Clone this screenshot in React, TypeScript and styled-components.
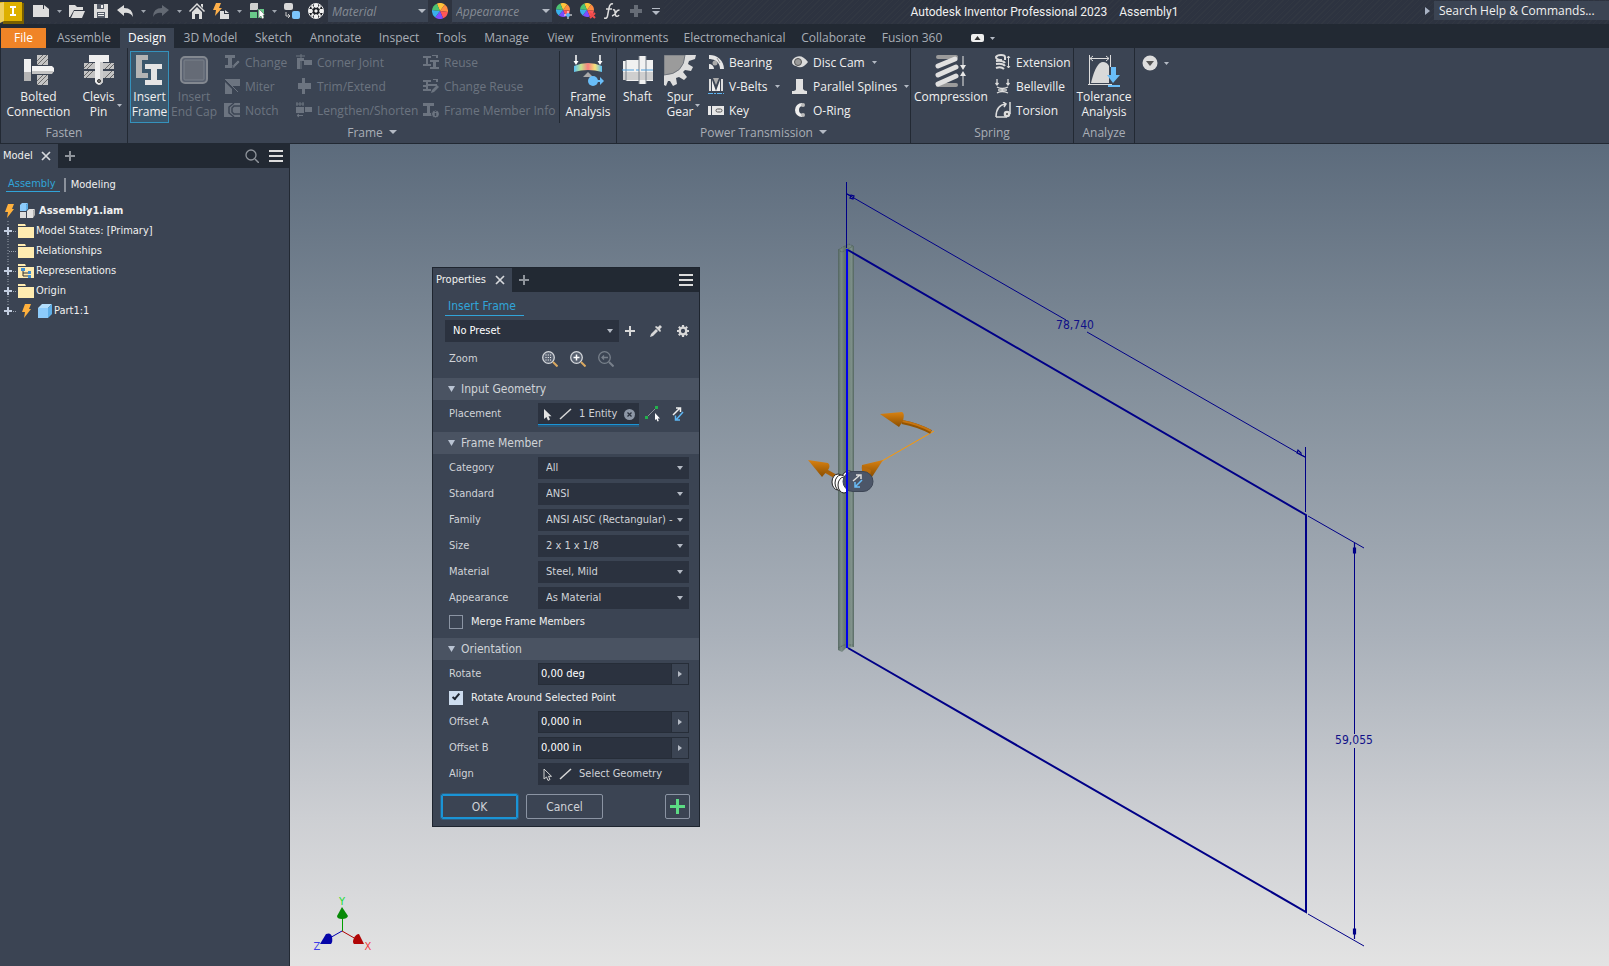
import React, { ReactNode } from "react";
import styled, { createGlobalStyle, css } from "styled-components";

const color = {
  bar: "#2e3440",
  dark: "#222933",
  panel: "#3b4453",
  field: "#2b323f",
  section: "#4a5362",
  text: "#f0f0f0",
  soft: "#d0d3d8",
  muted: "#a9aeb6",
  off: "#6c7480",
  link: "#31a4d8",
};
const ui = `"Open Sans", "Noto Sans", sans-serif`;
const narrow = `"DejaVu Sans Condensed", "DejaVu Sans", sans-serif`;

const GlobalStyle = createGlobalStyle`
  *, *::before, *::after { box-sizing: border-box; }
  body { margin: 0; background: ${color.panel}; }
  button, input, select { font: inherit; color: inherit; margin: 0; }
  button { background: none; border: 0; padding: 0; cursor: pointer; }
  svg { display: block; flex: none; }
`;

const Page = styled.div`
  display: flex;
  flex-direction: column;
  min-height: 100vh;
  font: 12px/15px ${ui};
  color: ${color.text};
  overflow: hidden;
`;

/* ---------- title bar ---------- */

const TitleBar = styled.header`
  display: flex;
  height: 24px;
  background: repeating-linear-gradient(135deg, #2d3340 0 3px, #313742 3px 4px);
`;
const QuickAccess = styled.div`
  display: flex;
  align-items: center;
  height: 22px;
  background: ${color.bar};
`;
const AppButton = styled.button`
  width: 29px;
  height: 24px;
  align-self: flex-start;
`;
const QuickButton = styled.button<{ $w?: number }>`
  display: flex;
  align-items: center;
  justify-content: center;
  width: ${(p) => p.$w ?? 24}px;
  height: 22px;
`;
const ComboBox = styled.div`
  position: relative;
  display: flex;
  align-items: center;
  width: 100px;
  height: 22px;
  background: ${color.panel};
  color: #858b94;
  font-style: italic;
  & > svg { position: absolute; right: 2px; pointer-events: none; }
`;
const ComboSelect = styled.select`
  appearance: none;
  width: 100%;
  height: 22px;
  padding: 0 4px;
  border: 0;
  background: transparent;
`;
const WindowTitle = styled.h1`
  flex: 1;
  display: flex;
  align-items: center;
  justify-content: center;
  gap: 12px;
  margin: 0;
  font: 400 12px/15px Roboto, ${ui};
  white-space: nowrap;
`;
const SearchArea = styled.div`
  display: flex;
  align-items: center;
  gap: 4px;
  height: 21px;
`;
const SearchInput = styled.input`
  width: 175px;
  height: 19px;
  padding: 0 5px;
  border: 0;
  background: ${color.panel};
  &::placeholder { color: ${color.text}; opacity: 1; }
`;

/* ---------- ribbon ---------- */

const TabBar = styled.nav`
  display: flex;
  align-items: flex-end;
  height: 24px;
  padding-left: 1px;
  background: ${color.dark};
`;
const Tab = styled.button<{ $w: number; $kind?: "file" | "active" }>`
  width: ${(p) => p.$w}px;
  height: 20px;
  padding-bottom: 2px;
  color: ${color.muted};
  white-space: nowrap;
  ${(p) => p.$kind === "active" && css`background: ${color.panel}; color: #fff;`}
  ${(p) => p.$kind === "file" && css`background: #f08427; color: #fff; margin-right: 2px;`}
`;
const TabToggle = styled.button`
  display: flex;
  align-items: center;
  gap: 6px;
  height: 20px;
  margin-left: 20px;
`;
const Ribbon = styled.div`
  display: flex;
  height: 96px;
  background: ${color.panel};
  border-left: 1px solid ${color.dark};
  border-bottom: 1px solid ${color.dark};
`;
const Panel = styled.section<{ $w: number }>`
  display: flex;
  flex-direction: column;
  width: ${(p) => p.$w}px;
  border-right: 1px solid ${color.dark};
`;
const PanelBody = styled.div<{ $inset?: number }>`
  display: flex;
  height: 75px;
  padding: 3px 0 0 ${(p) => p.$inset ?? 0}px;
`;
const PanelTitle = styled.h2`
  display: flex;
  align-items: center;
  justify-content: center;
  gap: 6px;
  height: 20px;
  margin: 0;
  padding-bottom: 2px;
  font-size: 12px;
  font-weight: 400;
  color: ${color.muted};
`;
const BigButton = styled.button<{ $w: number; $selected?: boolean; $after?: number }>`
  display: flex;
  flex-direction: column;
  align-items: center;
  gap: 2px;
  width: ${(p) => p.$w}px;
  height: 72px;
  padding-top: 3px;
  margin-right: ${(p) => p.$after ?? 0}px;
  border: 1px solid transparent;
  text-align: center;
  white-space: pre;
  &:disabled { color: ${color.off}; }
  ${(p) => p.$selected && css`background: #3b566b; border-color: #3592bc;`}
`;
const CaretButton = styled.button<{ $after?: number }>`
  display: flex;
  width: 6px;
  height: 72px;
  padding-top: 53px;
  margin-right: ${(p) => p.$after ?? 0}px;
`;
const SmallColumn = styled.div<{ $w: number }>`
  display: flex;
  flex-direction: column;
  align-items: flex-start;
  width: ${(p) => p.$w}px;
`;
const SmallButton = styled.button`
  display: flex;
  align-items: center;
  gap: 5px;
  height: 24px;
  padding-bottom: 2px;
  white-space: nowrap;
  &:disabled { color: ${color.off}; }
`;
const SmallCaret = styled.span`
  padding-left: 2px;
`;
const Separator = styled.div`
  width: 1px;
  height: 72px;
  background: ${color.dark};
`;
const RibbonMenu = styled.button`
  display: flex;
  align-items: center;
  gap: 6px;
  height: 30px;
  padding-left: 7px;
`;

/* ---------- model browser ---------- */

const Workspace = styled.main`
  display: flex;
  flex: 1;
`;
const Browser = styled.aside`
  width: 290px;
  flex: none;
  border-right: 1px solid ${color.dark};
  background: ${color.panel};
  font: 11px/14px ${narrow};
`;
const DockHeader = styled.div`
  display: flex;
  align-items: center;
  height: 24px;
  padding-right: 6px;
  background: ${color.dark};
`;
const DockTab = styled.div<{ $w: number }>`
  display: flex;
  align-items: center;
  justify-content: space-between;
  width: ${(p) => p.$w}px;
  height: 24px;
  padding: 0 7px 0 3px;
  margin-right: 7px;
  background: ${color.panel};
  color: ${color.text};
`;
const HeaderSpace = styled.span`
  flex: 1;
`;
const HeaderButton = styled.button<{ $after?: number }>`
  margin-right: ${(p) => p.$after ?? 0}px;
`;
const ModeBar = styled.div`
  display: flex;
  align-items: center;
  gap: 4px;
  height: 33px;
  padding-left: 6px;
`;
const ModeLink = styled.a<{ $active?: boolean }>`
  padding: 0 4px 0 2px;
  border-bottom: 1px solid ${(p) => (p.$active ? color.link : "transparent")};
  color: ${(p) => (p.$active ? color.link : color.text)};
  text-decoration: none;
  & + & { border-left: 2px solid #8b919b; border-bottom: 0; padding-left: 5px; }
`;
const Tree = styled.ul`
  margin: 0;
  padding: 0;
  list-style: none;
`;
const TreeRow = styled.li<{ $root?: boolean }>`
  display: flex;
  align-items: center;
  gap: ${(p) => (p.$root ? 4 : 2)}px;
  height: 20px;
  padding-left: ${(p) => (p.$root ? 5 : 0)}px;
  font-weight: ${(p) => (p.$root ? 700 : 400)};
  white-space: nowrap;
`;
const TreeGap = styled.span`
  width: 2px;
`;

/* ---------- viewport ---------- */

const Viewport = styled.div`
  position: relative;
  flex: 1;
  min-width: 0;
  background: linear-gradient(#5c6b7c 0%, #84909c 30%, #aab1ba 60%, #cdcfd3 82%, #e3e3e3 100%);
`;
const Drawing = styled.svg`
  position: absolute;
  inset: 0;
  width: 100%;
  height: 100%;
`;
const Triad = styled.svg`
  position: absolute;
  left: 20px;
  bottom: 12px;
`;

/* ---------- property dialog ---------- */

const Dialog = styled.form`
  position: absolute;
  left: 142px;
  top: 123px;
  width: 268px;
  border: 1px solid #1e252f;
  background: ${color.panel};
  font: 11px/14px ${narrow};
  color: ${color.soft};
`;
const Crumb = styled.div`
  padding: 7px 12px 4px;
`;
const CrumbLink = styled.a`
  display: inline-block;
  padding: 0 8px 1px 3px;
  border-bottom: 1px solid ${color.link};
  color: ${color.link};
  font-size: 12px;
  line-height: 15px;
  text-decoration: none;
`;
const PresetRow = styled.div`
  display: flex;
  align-items: center;
  padding: 0 10px 0 12px;
`;
const PresetTools = styled.div`
  display: flex;
  align-items: center;
  gap: 15px;
  padding-left: 6px;
`;
const Row = styled.div<{ $top?: number; $bottom?: number }>`
  display: flex;
  align-items: center;
  height: 22px;
  margin: ${(p) => p.$top ?? 4}px 10px ${(p) => p.$bottom ?? 0}px 16px;
`;
const RowLabel = styled.label`
  width: 89px;
  flex: none;
`;
const SelectWrap = styled.div<{ $w?: number }>`
  position: relative;
  display: flex;
  align-items: center;
  ${(p) => (p.$w ? css`width: ${p.$w}px;` : css`flex: 1;`)}
  height: 22px;
  background: ${color.field};
  & > svg { position: absolute; right: 6px; pointer-events: none; }
`;
const Select = styled.select<{ $strong?: boolean }>`
  appearance: none;
  width: 100%;
  height: 22px;
  padding: 0 14px 0 8px;
  border: 0;
  background: transparent;
  color: ${(p) => (p.$strong ? "#fff" : color.soft)};
`;
const Section = styled.button`
  display: flex;
  align-items: center;
  gap: 6px;
  width: 100%;
  height: 22px;
  padding-left: 15px;
  background: ${color.section};
  font-size: 12px;
`;
const ZoomTools = styled.div`
  display: flex;
  gap: 12px;
  padding-left: 4px;
`;
const Picker = styled.button<{ $active?: boolean }>`
  display: flex;
  align-items: center;
  gap: 7px;
  height: 22px;
  padding-left: 5px;
  background: ${color.field};
  white-space: nowrap;
  ${(p) => (p.$active ? css`width: 101px; box-shadow: inset 0 -1px #1a94d6, 0 2px #2b5676;` : css`flex: 1;`)}
`;
const PlacementTools = styled.div`
  display: flex;
  flex: 1;
  justify-content: space-between;
  padding: 0 4px 0 5px;
`;
const CheckRow = styled.label<{ $bottom: number }>`
  display: flex;
  align-items: center;
  gap: 8px;
  height: 14px;
  margin: 6px 0 ${(p) => p.$bottom}px 16px;
  color: ${color.text};
`;
const Check = styled.input`
  appearance: none;
  width: 14px;
  height: 14px;
  border: 1px solid #8b94a3;
  &:checked {
    border-color: #cddcee;
    background: #cddcee;
  }
  &:checked::after {
    content: "";
    display: block;
    width: 4px;
    height: 8px;
    margin: 0 0 0 4px;
    border: solid #1d2430;
    border-width: 0 2px 2px 0;
    transform: rotate(40deg);
  }
`;
const ValueField = styled.div`
  display: flex;
  flex: 1;
  height: 22px;
  border: 1px solid #262d38;
  background: ${color.field};
`;
const ValueInput = styled.input`
  flex: 1;
  min-width: 0;
  padding: 0 2px;
  border: 0;
  background: transparent;
  color: #fff;
`;
const ValueMore = styled.button`
  display: flex;
  align-items: center;
  justify-content: center;
  width: 17px;
  background: ${color.panel};
  border-left: 1px solid #262d38;
`;
const Footer = styled.div`
  display: flex;
  align-items: center;
  gap: 8px;
  padding: 9px 9px 7px 8px;
`;
const ActionButton = styled.button<{ $primary?: boolean }>`
  width: 77px;
  height: 25px;
  border: 1px solid #8b94a3;
  border-radius: 2px;
  font-size: 12px;
  ${(p) => p.$primary && css`border-color: #1a94d6; box-shadow: 0 0 0 1px #2f5e80, inset 0 0 0 1px #1a94d6;`}
`;
const AddButton = styled.button`
  display: flex;
  align-items: center;
  justify-content: center;
  width: 25px;
  height: 25px;
  margin-left: auto;
  border: 1px solid #8b94a3;
  border-radius: 2px;
`;

/* ---------- icons ---------- */

const Icon = ({ w = 16, h, children }: { w?: number; h?: number; children: ReactNode }) => (
  <svg width={w} height={h ?? w} viewBox={`0 0 ${w} ${h ?? w}`} aria-hidden="true">{children}</svg>
);
const Caret = ({ w = 5, fill = "#b4bac4" }: { w?: number; fill?: string }) => (
  <svg width={w} height={w === 5 ? 3 : 4} viewBox="0 0 8 4" preserveAspectRatio="none" aria-hidden="true">
    <path d="M0 0h8L4 4z" fill={fill} />
  </svg>
);
const RightCaret = () => <Icon w={5} h={8}><path d="M0 0l5 4-5 4z" fill="#a9b3c4" /></Icon>;
const SmallRight = () => <Icon w={4} h={6}><path d="M0 0l4 3-4 3z" fill="#b4bac4" /></Icon>;
const Plus = ({ w = 10, c = "#8f949b", t = 2 }: { w?: number; c?: string; t?: number }) => (
  <Icon w={w}><path d={`M${w / 2} 0v${w}M0 ${w / 2}h${w}`} stroke={c} strokeWidth={t} /></Icon>
);
const Cross = () => <Icon w={10}><path d="M1 1l8 8M9 1l-8 8" stroke="#d6d8dc" strokeWidth="1.7" /></Icon>;
const MenuLines = () => <Icon w={14} h={12}><path d="M0 1h14M0 6h14M0 11h14" stroke="#dcdcdc" strokeWidth="2" /></Icon>;
const Bolt = () => <Icon w={10} h={14}><path d="M3 0h6L7 5h2L2 14l1-6H0z" fill="#ffb13d" /></Icon>;
const Cube = () => (
  <Icon w={14}><path d="M0 4h10v10H0z" fill="#8ccbfb" /><path d="M0 4l4-4h10l-4 4z" fill="#b3defc" /><path d="M10 4l4-4v10l-4 4z" fill="#5eaee6" /></Icon>
);
const AssemblyIcon = () => (
  <Icon>
    <path d="M1 2l2-2h6L7 2v6H1z" fill="#8ccbfb" /><path d="M7 2l2-2v6L7 8z" fill="#5eaee6" />
    <path d="M1 9h6v6H1z" fill="#dcdcdc" /><path d="M8 8l2-2h6l-2 2v7H8z" fill="#e2e2e2" /><path d="M14 8l2-2v6l-2 3z" fill="#b3b3b3" />
  </Icon>
);
const Folder = ({ tree }: { tree?: boolean }) => (
  <Icon>
    <path d="M0 1h7l1 2H0zM0 4h16v11H0z" fill="#ffecb0" />
    {tree && <><path d="M5 7v6h5M5 10h5" fill="none" stroke="#333" /><path d="M3 5h4v3H3zM10 8h3v3h-3zM10 12h3v3h-3z" fill="#3f8fd2" /></>}
  </Icon>
);
const Branch = ({ expandable, last }: { expandable?: boolean; last?: boolean }) => (
  <Icon w={16} h={20}>
    <path d={last ? "M8 0v9" : "M8 0v20"} stroke="#9aa1ad" strokeDasharray="1 2" />
    <path d="M9 10.500h7" stroke="#9aa1ad" strokeDasharray="1 1" />
    {expandable && <><path d="M3 5h10v10H3z" fill={color.panel} /><path d="M8 6v8M4 10h8" stroke="#c3cee0" strokeWidth="2" /></>}
  </Icon>
);
const Wheel = ({ mark }: { mark?: "add" | "remove" }) => {
  const parts = ["#ffc23a", "#ff8c42", "#ff5757", "#7c4dff", "#39b0ec", "#4cc271"];
  const r = mark ? 7 : 8;
  const at = (i: number) => `${r + r * Math.sin((i * Math.PI) / 3 - 0.4)} ${r - r * Math.cos((i * Math.PI) / 3 - 0.4)}`;
  return (
    <Icon>
      {parts.map((c, i) => <path key={c} fill={c} d={`M${r} ${r}L${at(i)}A${r} ${r} 0 0 1 ${at(i + 1)}z`} />)}
      {mark === "add" && <><path d="M12 8v8M8 12h8" stroke="#fff" /><circle cx="12" cy="12" r="2" fill="#58b4f5" /></>}
      {mark === "remove" && <path d="M10 10l5 5M15 10l-5 5" stroke="#f04b4b" strokeWidth="2" />}
    </Icon>
  );
};
const Cursor = ({ outline }: { outline?: boolean }) => (
  <Icon w={9} h={13}><path d="M1 1v10l2.500-2 1.500 3.500 2-1-1.500-3.200H8.500z" fill={outline ? "none" : "#e4e4e4"} stroke="#d0d0d0" strokeWidth={outline ? 1 : 0} /></Icon>
);
const LineIcon = () => <Icon w={13} h={12}><path d="M1 11L12 1" stroke="#d8d8d8" strokeWidth="1.500" /></Icon>;
const SwapIcon = () => (
  <Icon w={14}>
    <path d="M2 8l7-7M5 1h4.500v4" fill="none" stroke="#eee" strokeWidth="1.500" />
    <path d="M12 5l-7 8M4.500 8.500V13H9" fill="none" stroke="#5db5f2" strokeWidth="1.500" />
  </Icon>
);
const Magnifier = ({ kind }: { kind: "window" | "in" | "back" }) => {
  const c = kind === "back" ? "#78808b" : "#d4d7db";
  return (
    <Icon>
      <circle cx="6.500" cy="6.500" r="5.800" fill={kind === "back" ? "none" : "#596271"} stroke={c} strokeWidth="1.300" />
      <path d="M11 11l4.500 4.500" stroke={kind === "back" ? c : "#d9a860"} strokeWidth="2" />
      {kind === "window" && <path d="M3.500 4h6M3.500 6.500h6M3.500 9h6" stroke="#fff" strokeDasharray="1 1.300" />}
      {kind === "in" && <path d="M3.500 6.500h6M6.500 3.500v6" stroke="#fff" strokeWidth="1.500" />}
      {kind === "back" && <path d="M4 6.500h6M6 4.500l-2 2 2 2" fill="none" stroke={c} strokeWidth="1.300" />}
    </Icon>
  );
};

const G = "#6c7480";
const smallIcons: Record<string, ReactNode> = {
  Change: <><path d="M1 1h10v3H8v7h3v3H1v-3h3V4H1z" fill={G} /><path d="M8 15l1-4 5-5 2 2-5 5z" fill={G} stroke={color.panel} strokeWidth=".7" /></>,
  Miter: <><path d="M1 1h15v7H8z" fill={G} /><path d="M1 4l7 7v5H1z" fill={G} /><path d="M1 1l13 13" stroke={G} /></>,
  Notch: <><path d="M0 1h16v14H0z" fill={G} /><path d="M16 4h-6L8 6v4l2 2h6M10 1L5 5v6l5 4" fill="none" stroke={color.panel} strokeWidth="1.500" /></>,
  "Corner Joint": <><path d="M1 4h7v3H4v8H1zM8 6h8v5H8z" fill={G} /><path d="M0 2h9M5 0v15" stroke={G} /></>,
  "Trim/Extend": <><path d="M2 5h4v6H2zM9 5h6v6H9z" fill={G} /><path d="M7.500 0v16" stroke={G} strokeWidth="3" /></>,
  "Lengthen/Shorten": <><path d="M0 5h8v6H0zM9 5h7v5H9z" fill={G} /><path d="M0 2h8M1 0v4M4 0v4M7 0v4M1 13.500h6M3 12l-2 1.500L3 15" fill="none" stroke={G} /></>,
  Reuse: <path d="M0 2h8v2H5v6h3v2H0v-2h3V4H0zM7 6h9v2h-3v5h3v2H7v-2h3V8H7zM9 1h6v3h-2V2H9z" fill={G} />,
  "Change Reuse": <path d="M0 2h8v2H5v2h9v2H5v3h3v2H0v-2h3V9H0V7h3V4H0zM10 1h5v3h-2V2h-3zM8 15l1-3 5-5 2 2-5 5z" fill={G} />,
  "Frame Member Info": <><path d="M0 1h11v3H7v7h3v3H0v-3h4V4H0z" fill={G} /><circle cx="12.500" cy="12" r="4" fill={G} stroke={color.panel} /><path d="M12.500 9v1M12.500 11v3" stroke={color.panel} strokeWidth="1.500" /></>,
  Bearing: <><path d="M1 1a14 14 0 0 1 15 14h-4A10 10 0 0 0 1 5z" fill="#e6e6e6" /><path d="M1 10a5 5 0 0 1 5 5H1z" fill="#e6e6e6" /><circle cx="7" cy="9" r="2.500" fill="#aaa" /><path d="M9 4l3 5" stroke="#999" /></>,
  "V-Belts": <><path d="M1 1h2v12H1zM13 1h2v12h-2z" fill="#ddd" /><path d="M4 2l4 11 4-11v11H4z" fill="#eee" /><path d="M5 0h6L8 7z" fill="#aaa" /><path d="M0 15.500h16" stroke="#5db5f2" strokeDasharray="5 1 2 1" /></>,
  Key: <><path d="M0 4h3v9H0zM4 4h12v9H4z" fill="#e8e8e8" /><rect x="8" y="7" width="6" height="3" rx="1.500" fill="none" stroke="#555" /></>,
  "Disc Cam": <><path d="M0 8Q6 0 12 4q4 1 4 4t-4 5Q6 16 0 8z" fill="#dcdcdc" transform="rotate(180 8 8)" /><circle cx="6" cy="8" r="3.500" fill="#999" stroke="#555" /></>,
  "Parallel Splines": <path d="M4 1h7v10q1 2 4 2v3H0v-3q4 0 4-2z" fill="#e0e0e0" />,
  "O-Ring": <><path d="M10 1a7 7 0 0 0 0 14l1-3a4 4 0 0 1 0-8z" fill="#eee" /><circle cx="11" cy="3" r="2" fill="#bbb" /><circle cx="11" cy="13" r="2" fill="#bbb" /></>,
  Extension: <><path d="M10 6V3q0-2-4-2T1 3q0 3 6 3M1 7q7-1 9 2M1 10q7-1 9 2M1 14q5-2 8 1" fill="none" stroke="#dcdcdc" strokeWidth="2" /><path d="M13.500 2v12M12 4l1.500-2L15 4M12 12l1.500 2 1.500-2" fill="none" stroke="#dcdcdc" /></>,
  Belleville: <path d="M2 1v6M0.500 5L2 7l1.500-2M13 1v6M11.500 5L13 7l1.500-2M2 9q5 3 11 0M3 12h9M2 15q5-3 11 0" fill="none" stroke="#dcdcdc" strokeWidth="1.300" />,
  Torsion: <><path d="M1 15Q1 3 11 2M8 0l3 2-2 3M15 0v12M1 15h11" fill="none" stroke="#dcdcdc" strokeWidth="1.500" /><circle cx="12" cy="12" r="3.300" fill="#ddd" /><circle cx="12" cy="12" r="1" fill="#444" /></>,
};

const bigIcons: Record<string, ReactNode> = {
  bolt: (
    <>
      <path d="M14 0h11v10H14zM14 20h11v10H14z" fill="#c4c4c4" />
      <path d="M14 6l6-6M14 10L24 0M19 10l6-6M14 26l6-6M14 30l10-10M19 30l6-6" stroke="#6b6b6b" />
      <path d="M1 4h7v13H1z" fill="#f0f0f0" /><path d="M1 17h7v9H1z" fill="#b5b5b5" />
      <path d="M9 11h20l2 2v4H9z" fill="#f4f4f4" /><path d="M9 16h22l-2 3H9z" fill="#c4c4c4" />
    </>
  ),
  pin: (
    <>
      <path d="M1 8h30v6H1zM1 16h30v7H1z" fill="#c4c4c4" />
      <path d="M1 13l5-5M4 14l6-6M22 14l6-6M26 14l5-5M1 21l5-5M3 23l7-7M22 23l7-7M27 23l4-4" stroke="#666" />
      <path d="M6 0h20v7H6zM12 7h8v20q-4 6-8 0z" fill="#efefef" /><path d="M17 7h3v20l-3 3z" fill="#ccc" />
      <circle cx="16" cy="26" r="1.500" fill="#777" stroke="#333" />
    </>
  ),
  frame: (
    <>
      <path d="M2 0h12v5H8v13h6v5H2z" fill="#b4b4b4" />
      <path d="M11 9h17v5h-5v11h5v5H11v-5h6V14h-6z" fill="#e4e4e4" />
    </>
  ),
  cap: <><rect x="3" y="2" width="26" height="26" rx="4" fill="#596170" stroke="#838890" strokeWidth="2" /><rect x="6" y="5" width="20" height="20" rx="1" fill="#656b76" stroke="#7b818a" /></>,
  analysis: (
    <>
      <defs><linearGradient id="stress"><stop offset="0" stopColor="#58c0f8" /><stop offset=".25" stopColor="#c5e48c" /><stop offset=".5" stopColor="#f77f7f" /><stop offset=".75" stopColor="#f6e27a" /><stop offset="1" stopColor="#58c0f8" /></linearGradient></defs>
      <path d="M2 11q14-6 28 0v6q-14-4-28 0z" fill="url(#stress)" />
      <path d="M4 0v8M28 0v8" stroke="#fff" strokeWidth="1.500" /><path d="M1.500 6h5l-2.500 4zM25.500 6h5l-2.500 4z" fill="#fff" />
      <path d="M16 17l5 5H11z" fill="#aaa" /><circle cx="21" cy="26" r="5" fill="#69bdf8" /><path d="M25 25h3v-3l4 4-4 4v-3h-3z" fill="#69bdf8" />
    </>
  ),
  shaft: (
    <>
      <path d="M1 6h3v19H1zM4 5h13v21H4zM17 1h7v28h-7zM24 5h7v21h-7z" fill="#f1f1f1" />
      <path d="M1 17h30v8H1z" fill="#cfcfcf" /><path d="M4 5v21M17 1v28M24 1v28" stroke="#79808a" />
      <path d="M0 15h32" stroke="#4f9fdc" strokeDasharray="12 2 3 2" />
    </>
  ),
  gear: (
    <>
      <path d="M0 0h32l-1 4-6 2-1 3 5 3-2 4-6-1-2 2 4 5-3 3-5-3-3 1 1 6-4 2-3-5H4l-2 5-2-1z" fill="#dedede" />
      <path d="M0 0h21Q20 19 0 20z" fill="#9b9b9b" stroke="#6f747c" />
    </>
  ),
  spring: (
    <>
      <path d="M3 2h18M3 30h18" stroke="#9b9b9b" strokeWidth="4" strokeLinecap="round" />
      <path d="M3 11L20 4M3 20l18-8M3 29l18-8" stroke="#e0e0e0" strokeWidth="5" strokeLinecap="round" />
      <path d="M28 1v10M28 20v11" stroke="#e8e8e8" /><path d="M25 10h6l-3 5zM25 21h6l-3-5z" fill="#e8e8e8" />
    </>
  ),
  tolerance: (
    <>
      <path d="M1.500 0v29M22.500 0v12M0 29.500h24" stroke="#ddd" /><path d="M2 3.500h19M5 1L2 3.500 5 6M18 1l3 2.500L18 6" fill="none" stroke="#ddd" />
      <path d="M3 28Q8 7 15 7q4 0 6 4v17z" fill="#d9d9d9" />
      <path d="M23 12h5v8h4l-7 8-6-8h4zM20 30h12v2H20z" fill="#69bdf8" />
    </>
  ),
};
const Big = ({ name }: { name: string }) => <Icon w={32}>{bigIcons[name]}</Icon>;

const Small = ({ label, disabled, menu }: { label: string; disabled?: boolean; menu?: boolean }) => (
  <SmallButton disabled={disabled}>
    <Icon>{smallIcons[label]}</Icon>
    {label}
    {menu && <SmallCaret><Caret /></SmallCaret>}
  </SmallButton>
);

/* ---------- page parts ---------- */

const QuickCaret = ({ w = 12 }: { w?: number }) => <QuickButton $w={w} aria-label="More"><Caret fill="#9fa5ae" /></QuickButton>;

const Header = () => (
  <TitleBar>
    <QuickAccess>
      <AppButton aria-label="Inventor">
        <Icon w={24}>
          <path d="M3 3h21v21H3z" fill="#7a6000" /><path d="M0 2h22v19H0z" fill="#ddb000" /><path d="M0 3l4-1v19l-4 2z" fill="#f0d060" />
          <path d="M10 6h6v2h-2v6h2v2h-6v-2h2V8h-2z" fill="#fff" />
        </Icon>
      </AppButton>
      <QuickButton aria-label="New"><Icon><path d="M0 2h10v4h6v8H0zM11 2l5 4h-5z" fill="#ddd" /></Icon></QuickButton>
      <QuickCaret />
      <QuickButton aria-label="Open"><Icon><path d="M0 2h6l2 2h6v3H5L1 14H0zM5 8h11l-3 7H2z" fill="#ddd" /></Icon></QuickButton>
      <QuickButton aria-label="Save"><Icon><path d="M1 1h14v14H1z" fill="#ddd" /><path d="M4 1h7v5H4zM4 9h8v6H4z" fill="#555c68" /><path d="M8 2h2v3H8zM5 10h6v1H5zM5 12h6v1H5z" fill="#eee" /></Icon></QuickButton>
      <QuickButton aria-label="Undo"><Icon><path d="M0 7l7-5v3q9 0 9 9-3-5-9-4v3z" fill="#ddd" /></Icon></QuickButton>
      <QuickCaret />
      <QuickButton aria-label="Redo"><Icon><path d="M16 7L9 2v3q-9 0-9 9 3-5 9-4v3z" fill="#636973" /></Icon></QuickButton>
      <QuickCaret />
      <QuickButton aria-label="Home"><Icon><path d="M8 0l8 8-1 1-7-7-7 7-1-1zM12 1h2v4l-2-2z" fill="#ddd" /><path d="M8 4l5 5v7h-3v-5H6v5H3V9z" fill="#ddd" /></Icon></QuickButton>
      <QuickButton aria-label="Update"><Icon><path d="M3 0h5L6 5h3l-7 8 1-6H0z" fill="#ffb04a" /><path d="M7 8h4v3h5v5H7zM12 7l4 3h-4z" fill="#ddd" /></Icon></QuickButton>
      <QuickCaret />
      <QuickButton aria-label="Select"><Icon><path d="M1 1l1-1h7v6l-1 1H1z" fill="#d0d0d0" /><path d="M1 9h7v6H1zM9 6h6v9H9z" fill="#69c98a" /><path d="M10 6v9l2-2 1 3 2-1-1-3h2z" fill="#fff" stroke="#333" strokeWidth=".4" /></Icon></QuickButton>
      <QuickCaret w={11} />
      <QuickButton aria-label="Component"><Icon><rect x="0" y="0" width="9" height="7" rx="2" fill="#d8d8d8" /><rect x="8" y="8" width="8" height="8" rx="2" fill="#7cc4fa" /><path d="M2 9v4h4M4 11l2 2-2 2" fill="none" stroke="#ccc" /></Icon></QuickButton>
      <QuickButton aria-label="Ball"><Icon><circle cx="8" cy="8" r="7.500" fill="#1c1f25" stroke="#f2f2f2" /><path d="M6 1h4v3l-2 1-2-1zM8 6l2 2-2 2-2-2zM6 15h4v-3l-2-1-2 1zM1 6v4h3l1-2-1-2zM15 6v4h-3l-1-2 1-2zM3 3l2-1 1 3-2 1zM13 3l-2-1-1 3 2 1zM3 13l2 1 1-3-2-1zM13 13l-2 1-1-3 2-1z" fill="#f2f2f2" /></Icon></QuickButton>
      <ComboBox><ComboSelect aria-label="Material"><option>Material</option></ComboSelect><Caret w={8} /></ComboBox>
      <QuickButton aria-label="Color wheel"><Wheel /></QuickButton>
      <ComboBox><ComboSelect aria-label="Appearance"><option>Appearance</option></ComboSelect><Caret w={8} /></ComboBox>
      <QuickButton aria-label="Add appearance"><Wheel mark="add" /></QuickButton>
      <QuickButton aria-label="Clear appearance"><Wheel mark="remove" /></QuickButton>
      <QuickButton aria-label="Parameters"><Icon><path d="M9 1Q6 0 5 5L3.500 13Q3 16 0 15M2 6h6M9 7q2-1 2 2t1 4q2 1 3-1M15.500 7Q13 7 12 9.500T8 13" fill="none" stroke="#ddd" strokeWidth="1.500" /></Icon></QuickButton>
      <QuickButton aria-label="Add"><Plus w={12} c="#666c76" t={4} /></QuickButton>
      <QuickButton $w={16} aria-label="Customize"><Icon w={8} h={7}><path d="M0 .5h8" stroke="#b4bac4" /><path d="M0 3h8L4 7z" fill="#b4bac4" /></Icon></QuickButton>
    </QuickAccess>
    <WindowTitle><span>Autodesk Inventor Professional 2023</span><span>Assembly1</span></WindowTitle>
    <SearchArea><RightCaret /><SearchInput aria-label="Search" placeholder="Search Help &amp; Commands..." /></SearchArea>
  </TitleBar>
);

const tabs: [string, number][] = [
  ["File", 45], ["Assemble", 72], ["Design", 54], ["3D Model", 73], ["Sketch", 53], ["Annotate", 71], ["Inspect", 56], ["Tools", 49],
  ["Manage", 61], ["View", 47], ["Environments", 91], ["Electromechanical", 119], ["Collaborate", 79], ["Fusion 360", 78],
];

const RibbonArea = () => (
  <>
    <TabBar>
      {tabs.map(([label, w]) => (
        <Tab key={label} $w={w} $kind={label === "File" ? "file" : label === "Design" ? "active" : undefined}>{label}</Tab>
      ))}
      <TabToggle aria-label="Minimize ribbon">
        <Icon w={13} h={8}><rect width="13" height="8" rx="2" fill="#eee" /><path d="M6.500 2l3 4h-6z" fill="#333" /></Icon>
        <Caret />
      </TabToggle>
    </TabBar>
    <Ribbon>
      <Panel $w={127}>
        <PanelBody>
          <BigButton $w={75} $after={4}><Big name="bolt" />{"Bolted\nConnection"}</BigButton>
          <BigButton $w={37}><Big name="pin" />{"Clevis\nPin"}</BigButton>
          <CaretButton aria-label="Clevis Pin menu"><Caret /></CaretButton>
        </PanelBody>
        <PanelTitle>Fasten</PanelTitle>
      </Panel>
      <Panel $w={489}>
        <PanelBody $inset={2}>
          <BigButton $w={39} $after={2} $selected><Big name="frame" />{"Insert\nFrame"}</BigButton>
          <BigButton $w={46} $after={7} disabled><Big name="cap" />{"Insert\nEnd Cap"}</BigButton>
          <SmallColumn $w={72}><Small label="Change" disabled /><Small label="Miter" disabled /><Small label="Notch" disabled /></SmallColumn>
          <SmallColumn $w={127}><Small label="Corner Joint" disabled /><Small label="Trim/Extend" disabled /><Small label="Lengthen/Shorten" disabled /></SmallColumn>
          <SmallColumn $w={136}><Small label="Reuse" disabled /><Small label="Change Reuse" disabled /><Small label="Frame Member Info" disabled /></SmallColumn>
          <Separator />
          <BigButton $w={56}><Big name="analysis" />{"Frame\nAnalysis"}</BigButton>
        </PanelBody>
        <PanelTitle>Frame <Caret w={8} /></PanelTitle>
      </Panel>
      <Panel $w={294}>
        <PanelBody $inset={2}>
          <BigButton $w={37} $after={9}><Big name="shaft" />Shaft</BigButton>
          <BigButton $w={30}><Big name="gear" />{"Spur\nGear"}</BigButton>
          <CaretButton $after={7} aria-label="Spur Gear menu"><Caret /></CaretButton>
          <SmallColumn $w={84}><Small label="Bearing" /><Small label="V-Belts" menu /><Small label="Key" /></SmallColumn>
          <SmallColumn $w={118}><Small label="Disc Cam" menu /><Small label="Parallel Splines" menu /><Small label="O-Ring" /></SmallColumn>
        </PanelBody>
        <PanelTitle>Power Transmission <Caret w={8} /></PanelTitle>
      </Panel>
      <Panel $w={163}>
        <PanelBody>
          <BigButton $w={80} $after={4}><Big name="spring" />Compression</BigButton>
          <SmallColumn $w={78}><Small label="Extension" /><Small label="Belleville" /><Small label="Torsion" /></SmallColumn>
        </PanelBody>
        <PanelTitle>Spring</PanelTitle>
      </Panel>
      <Panel $w={61}>
        <PanelBody>
          <BigButton $w={60}><Big name="tolerance" />{"Tolerance\nAnalysis"}</BigButton>
        </PanelBody>
        <PanelTitle>Analyze</PanelTitle>
      </Panel>
      <RibbonMenu aria-label="Panel options">
        <Icon><circle cx="8" cy="8" r="7.500" fill="#ddd" /><path d="M4 6h8l-4 5z" fill="#555" /></Icon>
        <Caret />
      </RibbonMenu>
    </Ribbon>
  </>
);

const ModelBrowser = () => (
  <Browser>
    <DockHeader>
      <DockTab $w={58}>Model<button aria-label="Close"><Cross /></button></DockTab>
      <button aria-label="Add tab"><Plus /></button>
      <HeaderSpace />
      <HeaderButton $after={10} aria-label="Search"><Icon w={14}><circle cx="6" cy="6" r="5" fill="none" stroke="#8f949b" strokeWidth="1.300" /><path d="M10 10l4 4" stroke="#8f949b" strokeWidth="1.500" /></Icon></HeaderButton>
      <HeaderButton aria-label="Menu"><MenuLines /></HeaderButton>
    </DockHeader>
    <ModeBar><ModeLink $active href="#assembly">Assembly</ModeLink><ModeLink href="#modeling">Modeling</ModeLink></ModeBar>
    <Tree>
      <TreeRow $root><Bolt /><AssemblyIcon />Assembly1.iam</TreeRow>
      <TreeRow><Branch expandable /><Folder />Model States: [Primary]</TreeRow>
      <TreeRow><Branch /><Folder />Relationships</TreeRow>
      <TreeRow><Branch expandable /><Folder tree />Representations</TreeRow>
      <TreeRow><Branch expandable /><Folder />Origin</TreeRow>
      <TreeRow><Branch expandable last /><TreeGap /><Bolt /><TreeGap /><Cube />Part1:1</TreeRow>
    </Tree>
  </Browser>
);

const Scene = () => (
  <Drawing viewBox="290 144 1319 822" preserveAspectRatio="xMinYMin meet" role="img" aria-label="Frame model">
    <defs>
      <linearGradient id="beam"><stop offset="0" stopColor="#4f625b" /><stop offset=".2" stopColor="#788a83" /><stop offset=".45" stopColor="#5d7068" /><stop offset=".6" stopColor="#6c7f77" /><stop offset=".85" stopColor="#7d9087" /><stop offset="1" stopColor="#4f625b" /></linearGradient>
      <linearGradient id="cone" x1="0" y1="0" x2="0" y2="1"><stop offset="0" stopColor="#d98212" /><stop offset="1" stopColor="#8a4e00" /></linearGradient>
    </defs>
    <path d="M838 250l8-5 8 1v401l-8 1-4 4-4-2z" fill="url(#beam)" opacity=".9" />
    <path d="M838 250l5-3 6-3 4 2-5 3-6 3zM838 648l6-3 9 0" fill="none" stroke="#566961" strokeDasharray="2 1" />
    <path d="M847 249v399" stroke="#0000f0" strokeWidth="2" />
    <g fill="none" stroke="#000087">
      <path d="M848 250l458 265v397L848 648" strokeWidth="2" />
      <path d="M846.500 182v66M1305.500 447v65M1354.500 543v191M1354.500 748v191M847 194l219 126M1087 332l218 125M1308 516l56 32M1308 914l56 32" />
      <path d="M847 194l4 2M851 195l3 1-1 3-3-1zM1305 457l-4-2M1301 455l-4-2 1-3 3 3zM1354.500 543v5M1353.500 548h2v5h-2zM1354.500 939v-5M1353.500 929h2v5h-2z" strokeWidth="1.200" />
    </g>
    <g fill="#101088" fontFamily={narrow} fontSize="12" textAnchor="middle">
      <text x="1075" y="329">78,740</text>
      <text x="1354" y="744">59,055</text>
    </g>
    <path d="M934 431l-52 30" stroke="#ff9800" />
    <path d="M902 422q16 3 29 10" fill="none" stroke="#935400" strokeWidth="4" /><path d="M902 421q16 3 29 10" fill="none" stroke="#c67410" strokeWidth="2" />
    <path d="M880 414l22-2q3 1 1 9l-4 6z" fill="url(#cone)" />
    <path d="M824 470l16 9" stroke="#a86008" strokeWidth="4" /><path d="M808 460l20 3q3 3 0 7l-6 7z" fill="url(#cone)" />
    <path d="M883 460l-21 5q-1 6 2 9l8 3z" fill="url(#cone)" /><path d="M862 465l9 5-1 6-8-2z" fill="#b86b0c" />
    <g fill="#fff" stroke="#222"><circle cx="849" cy="478" r="7" /><ellipse cx="838" cy="482" rx="6" ry="8" /><ellipse cx="841" cy="483" rx="6" ry="8" /><ellipse cx="844" cy="485" rx="6" ry="8" /></g>
    <rect x="843" y="471.500" width="30" height="20" rx="10" fill="#4c5668" stroke="#3d4655" />
    <path d="M847 466v27" stroke="#0000f0" strokeWidth="2" />
    <path d="M853 481l7-6M856 475h5v4" fill="none" stroke="#ddd" strokeWidth="1.500" />
    <path d="M862 480l-7 7M855 482v5h5" fill="none" stroke="#69bdf8" strokeWidth="1.500" />
  </Drawing>
);

const AxisTriad = () => (
  <Triad width="66" height="60" viewBox="310 894 66 60" aria-label="Axes">
    <path d="M342.500 931v-16" stroke="#00a000" /><path d="M342 931l14 8" stroke="#b00000" /><path d="M342 931l-14 8" stroke="#0000b0" />
    <path d="M342 907l6 9q-1 3-6 3t-5-3z" fill="#078a07" /><path d="M364 944h-10q-2-2 0-6t5-4z" fill="#b00505" /><path d="M320 944h11q2-2 1-7t-6-3z" fill="#0505a8" />
    <g fontFamily={narrow} fontSize="11" textAnchor="middle"><text x="342" y="905" fill="#22dd33">Y</text><text x="368" y="950" fill="#f03c3c">X</text><text x="317" y="950" fill="#3c3ce8">Z</text></g>
  </Triad>
);

const SelectRow = ({ label, value, top, bottom }: { label: string; value: string; top?: number; bottom?: number }) => (
  <Row $top={top} $bottom={bottom}>
    <RowLabel htmlFor={label}>{label}</RowLabel>
    <SelectWrap><Select id={label}><option>{value}</option></Select><Caret w={6} /></SelectWrap>
  </Row>
);
const ValueRow = ({ label, value, top }: { label: string; value: string; top?: number }) => (
  <Row $top={top}>
    <RowLabel htmlFor={label}>{label}</RowLabel>
    <ValueField><ValueInput id={label} defaultValue={value} /><ValueMore type="button" aria-label={`${label} options`}><SmallRight /></ValueMore></ValueField>
  </Row>
);
const SectionHead = ({ children }: { children: ReactNode }) => (
  <Section type="button"><Icon w={7} h={6}><path d="M0 0h7L3.500 6z" fill="#b9c3d2" /></Icon>{children}</Section>
);

const Properties = () => (
  <Dialog onSubmit={(e) => e.preventDefault()}>
    <DockHeader>
      <DockTab $w={79}>Properties<button type="button" aria-label="Close"><Cross /></button></DockTab>
      <button type="button" aria-label="Add tab"><Plus /></button>
      <HeaderSpace />
      <HeaderButton type="button" aria-label="Menu"><MenuLines /></HeaderButton>
    </DockHeader>
    <Crumb><CrumbLink href="#insert-frame">Insert Frame</CrumbLink></Crumb>
    <PresetRow>
      <SelectWrap $w={174}><Select $strong aria-label="Preset"><option>No Preset</option></Select><Caret w={6} /></SelectWrap>
      <PresetTools>
        <button type="button" aria-label="Add preset"><Plus c="#d8d8d8" /></button>
        <button type="button" aria-label="Pick"><Icon w={12}><path d="M0 12l1-3 5-5 2 2-5 5z" fill="#d8d8d8" /><path d="M5 2l5 5 1-1-1-2 2-2-2-2-2 2-2-1z" fill="#d8d8d8" /></Icon></button>
        <button type="button" aria-label="Settings"><Icon w={12}><circle cx="6" cy="6" r="3.300" fill="none" stroke="#d8d8d8" strokeWidth="2.300" /><path d="M6 0v2M6 10v2M0 6h2M10 6h2M1.800 1.800l1.400 1.400M8.800 8.800l1.400 1.400M10.200 1.800L8.800 3.200M3.200 8.800l-1.400 1.400" stroke="#d8d8d8" strokeWidth="2.200" /></Icon></button>
      </PresetTools>
    </PresetRow>
    <Row $top={6} $bottom={8}>
      <RowLabel as="span">Zoom</RowLabel>
      <ZoomTools>
        <button type="button" aria-label="Zoom window"><Magnifier kind="window" /></button>
        <button type="button" aria-label="Zoom in"><Magnifier kind="in" /></button>
        <button type="button" aria-label="Zoom back" disabled><Magnifier kind="back" /></button>
      </ZoomTools>
    </Row>
    <SectionHead>Input Geometry</SectionHead>
    <Row $top={3} $bottom={7}>
      <RowLabel as="span">Placement</RowLabel>
      <Picker type="button" $active><Cursor /><LineIcon />1 Entity<Icon w={11}><circle cx="5.500" cy="5.500" r="5.500" fill="#8d97a6" /><path d="M3.500 3.500l4 4M7.500 3.500l-4 4" stroke="#2b323f" strokeWidth="1.300" /></Icon></Picker>
      <PlacementTools>
        <button type="button" aria-label="Pick edge"><Icon><path d="M2 12L12 2" stroke="#8a8f97" /><path d="M1 10h3v3H1zM11 0h3v3h-3z" fill="#22b14c" /><path d="M11 7v7l1.500-1 1 2.500 1.300-.6-1-2.400H16z" fill="#fff" /></Icon></button>
        <button type="button" aria-label="Flip"><SwapIcon /></button>
      </PlacementTools>
    </Row>
    <SectionHead>Frame Member</SectionHead>
    <SelectRow label="Category" value="All" top={3} />
    <SelectRow label="Standard" value="ANSI" />
    <SelectRow label="Family" value="ANSI AISC (Rectangular) -" />
    <SelectRow label="Size" value="2 x 1 x 1/8" />
    <SelectRow label="Material" value="Steel, Mild" />
    <SelectRow label="Appearance" value="As Material" />
    <CheckRow $bottom={9}><Check type="checkbox" />Merge Frame Members</CheckRow>
    <SectionHead>Orientation</SectionHead>
    <ValueRow label="Rotate" value="0,00 deg" top={3} />
    <CheckRow $bottom={6}><Check type="checkbox" defaultChecked />Rotate Around Selected Point</CheckRow>
    <ValueRow label="Offset A" value="0,000 in" />
    <ValueRow label="Offset B" value="0,000 in" />
    <Row><RowLabel as="span">Align</RowLabel><Picker type="button"><Cursor outline /><LineIcon />Select Geometry</Picker></Row>
    <Footer>
      <ActionButton $primary>OK</ActionButton>
      <ActionButton type="button">Cancel</ActionButton>
      <AddButton type="button" aria-label="Apply"><Plus w={15} c="#5cdb84" t={3} /></AddButton>
    </Footer>
  </Dialog>
);

export default function App() {
  return (
    <Page>
      <GlobalStyle />
      <Header />
      <RibbonArea />
      <Workspace>
        <ModelBrowser />
        <Viewport>
          <Scene />
          <AxisTriad />
          <Properties />
        </Viewport>
      </Workspace>
    </Page>
  );
}
